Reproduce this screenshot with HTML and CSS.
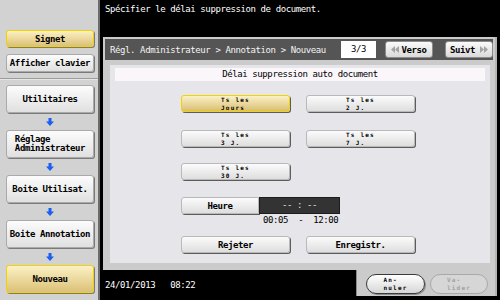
FILE: index.html
```html
<!DOCTYPE html>
<html lang="fr">
<head>
<meta charset="utf-8">
<title>Délai suppression auto document</title>
<link rel="stylesheet" href="styles.css">
</head>
<body>
<div class="screen">
  <aside class="sidebar">
    <div class="sbtn sel signet">Signet</div>
    <div class="sbtn kbd">Afficher clavier</div>
    <div class="sep"></div>
    <div class="sbtn">Utilitaires</div>
    <div class="arrow"><svg width="8" height="8" viewBox="0 0 8 8"><path d="M2.5 0h3v3.5H8L4 8 0 3.5h2.5z"/></svg></div>
    <div class="sbtn"><span class="multi">Réglage<br>Administrateur</span></div>
    <div class="arrow"><svg width="8" height="8" viewBox="0 0 8 8"><path d="M2.5 0h3v3.5H8L4 8 0 3.5h2.5z"/></svg></div>
    <div class="sbtn">Boite Utilisat.</div>
    <div class="arrow"><svg width="8" height="8" viewBox="0 0 8 8"><path d="M2.5 0h3v3.5H8L4 8 0 3.5h2.5z"/></svg></div>
    <div class="sbtn">Boite Annotation</div>
    <div class="arrow"><svg width="8" height="8" viewBox="0 0 8 8"><path d="M2.5 0h3v3.5H8L4 8 0 3.5h2.5z"/></svg></div>
    <div class="sbtn sel">Nouveau</div>
  </aside>
  <main class="main">
    <div class="msg">Spécifier le délai suppression de document.</div>
    <section class="panel">
      <div class="header">
        <span class="crumb">Régl. Administrateur &gt; Annotation &gt; Nouveau</span>
        <span class="page">3/3</span>
        <div class="nav prev"><svg width="8" height="7" viewBox="0 0 8 7"><path d="M4 0v7L0 3.5zM8 0v7L4 3.5z"/></svg>Verso</div>
        <div class="nav next">Suivt<svg width="8" height="7" viewBox="0 0 8 7"><path d="M0 0v7l4-3.5zM4 0v7l4-3.5z"/></svg></div>
      </div>
      <div class="content">
        <div class="title">Délai suppression auto document</div>
        <div class="rows">
          <div class="row r1">
            <div class="btn sel"><span class="tiny">Ts les<br>Jours</span></div>
            <div class="btn"><span class="tiny">Ts les<br>2 J.</span></div>
          </div>
          <div class="row r2">
            <div class="btn"><span class="tiny">Ts les<br>3 J.</span></div>
            <div class="btn"><span class="tiny">Ts les<br>7 J.</span></div>
          </div>
          <div class="row r3">
            <div class="btn"><span class="tiny">Ts les<br>30 J.</span></div>
          </div>
          <div class="row r4">
            <div class="btn heure">Heure</div>
            <div class="time">-- : --</div>
          </div>
          <div class="range">00:05  -  12:00</div>
          <div class="row r5">
            <div class="btn">Rejeter</div>
            <div class="btn">Enregistr.</div>
          </div>
        </div>
      </div>
    </section>
    <div class="footer">
      <div class="status"><span>24/01/2013</span><span>08:22</span></div>
      <div class="actions">
        <div class="pill"><span class="tiny">An-<br>nuler</span></div>
        <div class="pill dis"><span class="tiny">Va-<br>lider</span></div>
      </div>
    </div>
  </main>
</div>
</body>
</html>
```
FILE: styles.css
```css
* { box-sizing: border-box; margin: 0; padding: 0; }
html, body { width: 500px; height: 300px; background: #000; overflow: hidden; }
body {
  font-family: "DejaVu Sans Mono", "Liberation Mono", monospace;
  font-size: 9px;
  letter-spacing: -0.4px;
  color: #000;
}
.screen { display: flex; width: 500px; height: 300px; }

/* sidebar */
.sidebar {
  width: 100px;
  height: 300px;
  background: #d2d2d2;
  border-right: 2px solid #6c6c6c;
  display: flex;
  flex-direction: column;
  padding-top: 30px;
}
.sbtn {
  margin: 0 4px 0 6px;
  height: 28px;
  flex: none;
  display: flex;
  align-items: center;
  justify-content: center;
  border: 1px solid #aaaaaa;
  border-radius: 3px;
  background: linear-gradient(#fcfcfc, #e0e0e0);
  box-shadow: 1px 1px 0 #7a7a7a;
  font-weight: bold;
  white-space: nowrap;
}
.sbtn.sel {
  border-color: #f2d200;
  background: linear-gradient(#fbf1c4, #dcc177);
}
.sbtn.signet { height: 17px; }
.sbtn.kbd { height: 18px; margin-top: 7px; }
.multi { display: inline-block; text-align: left; line-height: 9px; }
.sep {
  height: 2px;
  margin: 6px 0 5px;
  background: #9c9c9c;
  border-bottom: 1px solid #e6e6e6;
  flex: none;
}
.arrow {
  height: 17px;
  flex: none;
  display: flex;
  align-items: center;
  justify-content: center;
  padding-left: 2px;
}
.arrow svg { fill: #1a5ff0; display: block; }

/* main */
.main { width: 400px; display: flex; flex-direction: column; }
.msg {
  height: 37px;
  padding: 3px 0 0 5px;
  line-height: 12px;
  color: #fff;
}
.panel {
  margin-left: 3px;
  width: 394px;
  height: 233px;
  background: #cbcbcb;
  padding: 2px;
  border-right: 2px solid #b4b4b4;
}
.header {
  height: 21px;
  background: #555555;
  display: flex;
  align-items: center;
  padding: 0 0 0 5px;
  color: #f4f4f4;
}
.crumb { flex: 1; white-space: nowrap; }
.page {
  width: 35px;
  height: 17px;
  background: #fff;
  color: #000;
  text-align: center;
  line-height: 17px;
  margin-right: 9px;
}
.nav {
  width: 48px;
  height: 17px;
  border: 1px solid #8c8c8c;
  border-radius: 3px;
  background: linear-gradient(#fafafa, #dadada);
  color: #000;
  font-weight: bold;
  display: flex;
  align-items: center;
  justify-content: center;
  gap: 2px;
}
.nav svg { fill: #a4a4a4; display: block; }
.nav.next { margin-left: 12px; gap: 5px; }

.content {
  margin: 5px 3px 0 5px;
  height: 198px;
  background: #e6e5e9;
  padding: 3px 5px 0;
}
.title {
  height: 13px;
  background: #faf6fa;
  text-align: center;
  line-height: 13px;
}
.rows { padding-left: 66px; display: flex; flex-direction: column; }
.row { display: flex; gap: 16px; }
.r1 { margin-top: 14px; }
.r2 { margin-top: 18px; }
.r3 { margin-top: 16px; }
.r4 { margin-top: 17px; gap: 0; }
.r5 { margin-top: 11px; }
.btn {
  width: 109px;
  height: 17px;
  display: flex;
  align-items: center;
  justify-content: center;
  border: 1px solid #b9b9b9;
  border-radius: 3px;
  background: linear-gradient(#fbfbfb, #dedede);
  box-shadow: 1px 1px 0 #5c5c5c;
  font-weight: bold;
}
.btn.sel {
  border-color: #f2d200;
  background: linear-gradient(#fbf1c4, #d9be74);
}
.btn.heure { width: 78px; border-radius: 3px 0 0 3px; }
.time {
  width: 81px;
  height: 17px;
  background: #333333;
  border: 1px solid #1c1c1c;
  color: #e8e8e8;
  text-align: center;
  line-height: 15px;
  white-space: pre;
}
.range {
  margin: 2px 0 0 82px;
  height: 9px;
  line-height: 9px;
  white-space: pre;
}
.tiny {
  display: inline-block;
  text-align: left;
  font-size: 6px;
  line-height: 7.5px;
  letter-spacing: 1.2px;
  font-weight: bold;
}

/* footer */
.footer { height: 26px; display: flex; }
.status {
  width: 257px;
  background: #000;
  border-right: 1px solid #8a8a8a;
  color: #fff;
  display: flex;
  gap: 15px;
  align-items: center;
  padding: 3px 0 0 5px;
}
.actions {
  width: 140px;
  background: #cbcbcb;
  border-right: 2px solid #b4b4b4;
  display: flex;
  align-items: center;
  gap: 5px;
  padding: 1px 0 0 9px;
}
.pill {
  width: 59px;
  height: 20px;
  border-radius: 10px;
  border: 1px solid #3a3a3a;
  background: linear-gradient(#ffffff, #d6d6d6);
  box-shadow: 1px 1px 0 #8a8a8a;
  display: flex;
  align-items: center;
  justify-content: center;
}
.pill.dis {
  width: 58px;
  border-color: #a9a9a9;
  background: #d6d6d6;
  box-shadow: none;
  color: #a2a2a2;
}
```
